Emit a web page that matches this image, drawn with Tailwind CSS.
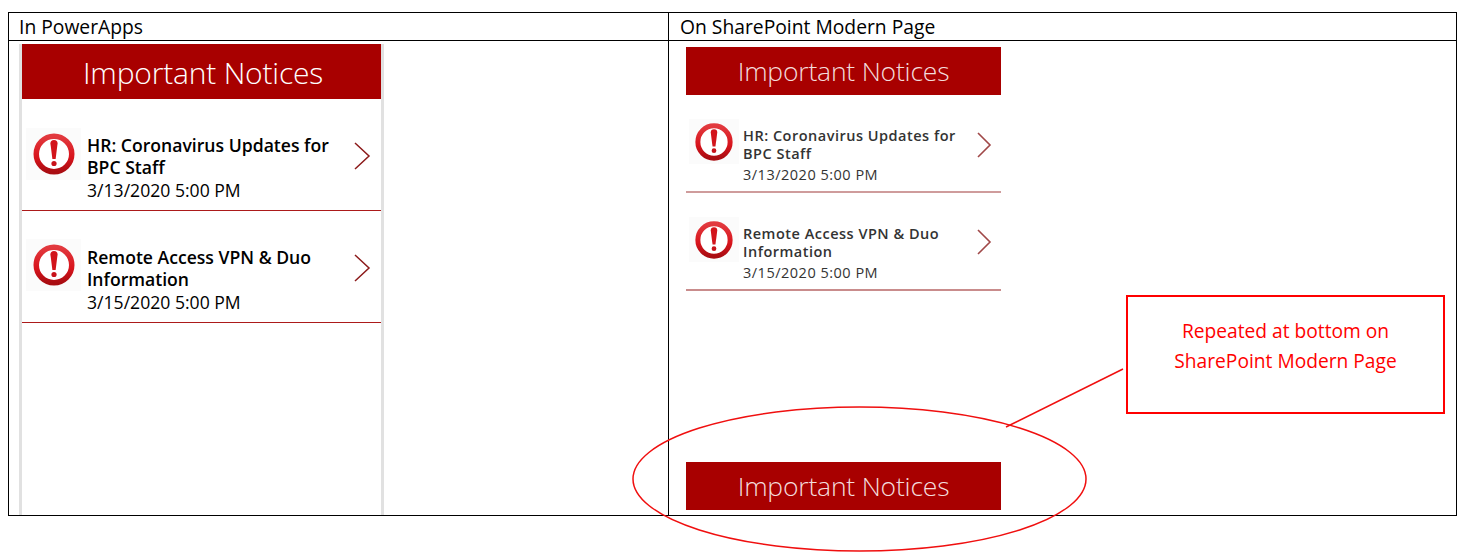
<!DOCTYPE html>
<html lang="en">
<head>
    <meta charset="UTF-8">
    <title>Important Notices</title>
    <script src="https://cdn.jsdelivr.net/npm/@tailwindcss/browser@4"></script>
</head>
<body class="bg-white w-[1464px] h-[560px] overflow-hidden relative font-['Open_Sans',sans-serif] text-black">
    <!-- shared alert icon -->
    <svg class="absolute w-0 h-0">
        <defs>
            <linearGradient id="ring" x1="0" y1="0" x2="0" y2="1">
                <stop offset="0" stop-color="#e23a3f"/>
                <stop offset="0.6" stop-color="#d8141c"/>
                <stop offset="1" stop-color="#a90d12"/>
            </linearGradient>
            <symbol id="alert" viewBox="0 0 44 44">
                <circle cx="22" cy="22" r="17.75" fill="#fff" stroke="url(#ring)" stroke-width="5.5"/>
                <path d="M18.4 11.5 a3.6 3.6 0 0 1 7.2 0 l-2 15.5 h-3.2 z" fill="#d2141b"/>
                <circle cx="22" cy="31.5" r="2.6" fill="#c81219"/>
            </symbol>
        </defs>
    </svg>

    <!-- comparison table -->
    <div class="absolute left-[8px] top-[12px] w-[1449px] h-[504px] border border-black grid grid-cols-[660px_1fr] grid-rows-[28px_1fr]">
        <div class="border-r border-b border-black pl-[10px] text-[19.3px] leading-[28px]">In PowerApps</div>
        <div class="border-b border-black pl-[11px] text-[19.3px] leading-[28px]">On SharePoint Modern Page</div>

        <!-- PowerApps column -->
        <div class="border-r border-black pl-[10px] pt-[3px] overflow-hidden">
            <div class="w-[365px] h-[472px] border-x-[3px] border-[#e1e1e1]">
                <div class="h-[55px] bg-[#a80000] text-white text-center font-light text-[30px] leading-[57px] pl-[3px] tracking-[-0.2px]">Important Notices</div>
                <div class="h-[112px] border-b border-b-[#ac1a1a] flex items-start pr-[10px]">
                    <div class="w-[55px] h-[52px] ml-[4px] mt-[29px] bg-[#fbfbfb] flex items-center justify-center shrink-0">
                        <svg class="w-[44px] h-[44px]"><use href="#alert"/></svg>
                    </div>
                    <div class="ml-[6px] w-[265px] text-[17.6px] leading-[22px] mt-[35px]">
                        <div class="font-semibold">HR: Coronavirus Updates for BPC Staff</div>
                        <div class="leading-[24px]">3/13/2020 5:00 PM</div>
                    </div>
                    <svg class="w-[18px] h-[28px] mt-[43px] ml-[1px] shrink-0" viewBox="0 0 18 28"><path d="M2 1 L16 14 L2 27" fill="none" stroke="#8c1a1a" stroke-width="1.5"/></svg>
                </div>
                <div class="h-[112px] border-b border-b-[#ac1a1a] flex items-start pr-[10px]">
                    <div class="w-[55px] h-[52px] ml-[4px] mt-[28px] bg-[#fbfbfb] flex items-center justify-center shrink-0">
                        <svg class="w-[44px] h-[44px]"><use href="#alert"/></svg>
                    </div>
                    <div class="ml-[6px] w-[265px] text-[17.6px] leading-[22px] mt-[35px]">
                        <div class="font-semibold">Remote Access VPN &amp; Duo Information</div>
                        <div class="leading-[24px]">3/15/2020 5:00 PM</div>
                    </div>
                    <svg class="w-[18px] h-[28px] mt-[43px] ml-[1px] shrink-0" viewBox="0 0 18 28"><path d="M2 1 L16 14 L2 27" fill="none" stroke="#8c1a1a" stroke-width="1.5"/></svg>
                </div>
            </div>
        </div>

        <!-- SharePoint column -->
        <div class="pl-[17px] pt-[6px] flex flex-col w-[332px]">
            <div class="w-[315px] h-[48px] bg-[#a80000] text-[#f3dcdc] text-center font-light text-[26.5px] leading-[48px] tracking-[-0.2px]">Important Notices</div>
            <div class="w-[315px] h-[98px] border-b-2 border-b-[#cf9c9c] flex items-start pr-[9px] -mb-[1px]">
                <div class="w-[50px] h-[45px] ml-[3px] mt-[24px] bg-[#fbfbfb] flex items-center justify-center shrink-0">
                    <svg class="w-[40px] h-[40px]"><use href="#alert"/></svg>
                </div>
                <div class="ml-[4px] w-[233px] text-[14.5px] leading-[18px] text-[#333] mt-[32px] tracking-[0.5px]">
                    <div class="font-semibold">HR: Coronavirus Updates for BPC Staff</div>
                    <div class="leading-[24px]">3/13/2020 5:00 PM</div>
                </div>
                <svg class="w-[16px] h-[26px] mt-[37px] shrink-0" viewBox="0 0 16 26"><path d="M2 1 L14 13 L2 25" fill="none" stroke="#a04848" stroke-width="1.6"/></svg>
            </div>
            <div class="w-[315px] h-[98px] border-b-2 border-b-[#c98c8c] flex items-start pr-[9px] mt-[1px]">
                <div class="w-[50px] h-[45px] ml-[3px] mt-[24px] bg-[#fbfbfb] flex items-center justify-center shrink-0">
                    <svg class="w-[40px] h-[40px]"><use href="#alert"/></svg>
                </div>
                <div class="ml-[4px] w-[233px] text-[14.5px] leading-[18px] text-[#333] mt-[32px] tracking-[0.5px]">
                    <div class="font-semibold">Remote Access VPN &amp; Duo Information</div>
                    <div class="leading-[24px]">3/15/2020 5:00 PM</div>
                </div>
                <svg class="w-[16px] h-[26px] mt-[36px] shrink-0" viewBox="0 0 16 26"><path d="M2 1 L14 13 L2 25" fill="none" stroke="#a04848" stroke-width="1.6"/></svg>
            </div>
            <div class="w-[315px] h-[48px] mt-[171px] bg-[#a80000] text-[#f3dcdc] text-center font-light text-[26.5px] leading-[48px] tracking-[-0.2px]">Important Notices</div>
        </div>
    </div>

    <!-- red annotation, drawn over the table -->
    <svg class="absolute left-0 top-0 pointer-events-none" width="1464" height="560" viewBox="0 0 1464 560">
        <ellipse cx="859.5" cy="479" rx="226.5" ry="72" fill="none" stroke="#f00f0f" stroke-width="1.5"/>
        <path d="M1123 369 L1006 427" stroke="#f00f0f" stroke-width="1.5" fill="none"/>
    </svg>
    <div class="absolute left-[1126px] top-[295px] w-[319px] h-[119px] border-2 border-[#f00] flex flex-col justify-center pb-[18px] text-center text-[#f00] text-[19.2px] leading-[30px]">
        <div>Repeated at bottom on</div>
        <div>SharePoint Modern Page</div>
    </div>
</body>
</html>
